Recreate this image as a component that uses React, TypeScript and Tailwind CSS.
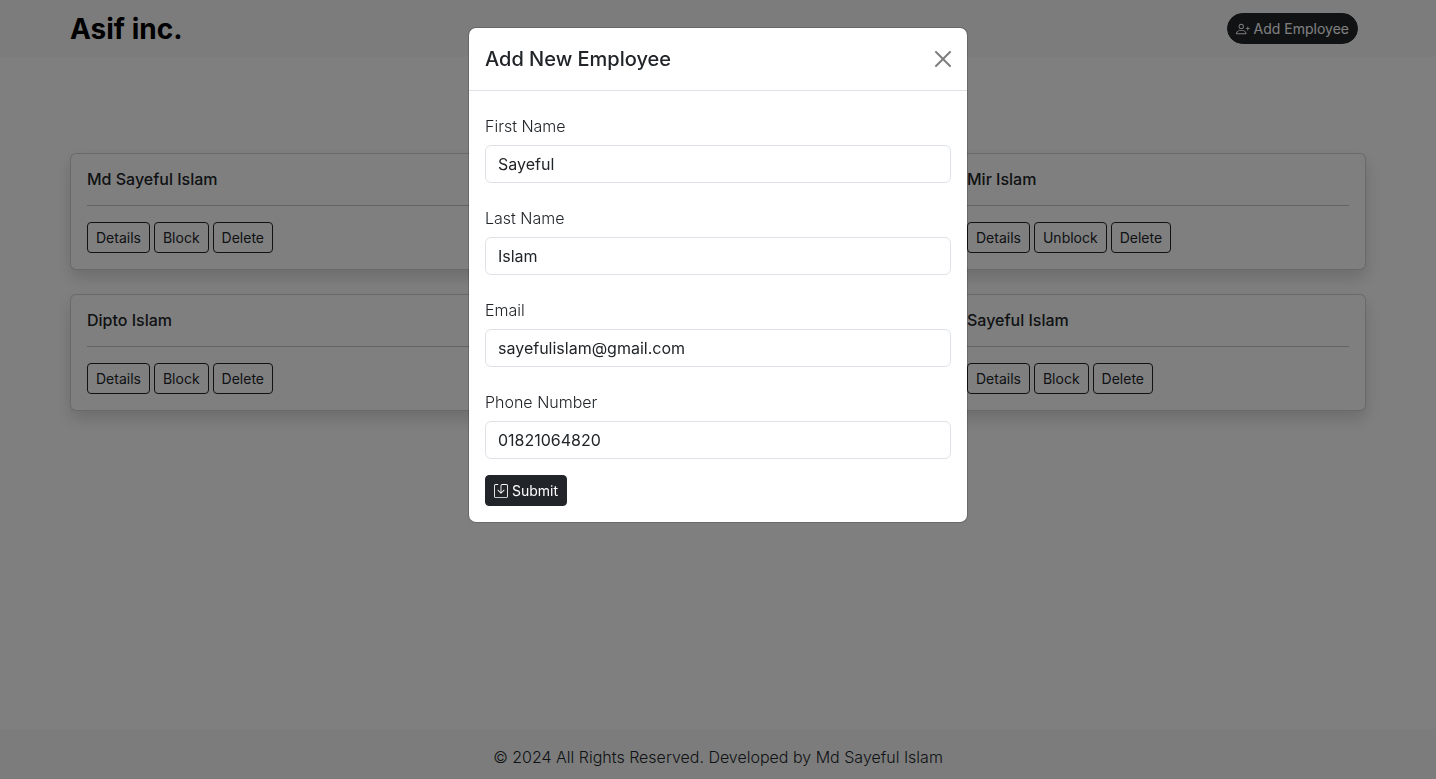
import type { InputHTMLAttributes } from "react";
import { BsPersonPlus, BsSave } from "react-icons/bs";

type Employee = { name: string; blocked: boolean; column: string };

const employees: Employee[] = [
  { name: "Md Sayeful Islam", blocked: false, column: "lg:col-start-1" },
  { name: "Mir Islam", blocked: true, column: "lg:col-start-3" },
  { name: "Dipto Islam", blocked: false, column: "lg:col-start-1" },
  { name: "Sayeful Islam", blocked: false, column: "lg:col-start-3" },
];

function OutlineButton({ label }: { label: string }) {
  return (
    <button
      type="button"
      className="rounded border border-[#212529] px-2 py-1 text-[14px] leading-[21px]"
    >
      {label}
    </button>
  );
}

function EmployeeCard({ name, blocked, column }: Employee) {
  return (
    <article
      className={`rounded-md border border-black/[.175] bg-white p-4 shadow-[0_8px_16px_rgba(0,0,0,0.15)] ${column}`}
    >
      <h2 className="text-[16px] leading-[19px] font-medium">{name}</h2>
      <hr className="my-4 border-[#212529]/25" />
      <div className="flex gap-1">
        <OutlineButton label="Details" />
        <OutlineButton label={blocked ? "Unblock" : "Block"} />
        <OutlineButton label="Delete" />
      </div>
    </article>
  );
}

type FieldProps = InputHTMLAttributes<HTMLInputElement> & { id: string; label: string };

function Field({ id, label, ...input }: FieldProps) {
  return (
    <div className="flex flex-col gap-[7px]">
      <label htmlFor={id} className="font-light">
        {label}
      </label>
      <input
        id={id}
        className="w-full rounded-md border border-[#dee2e6] bg-white px-3 py-1.5 leading-6"
        {...input}
      />
    </div>
  );
}

function AddEmployeeModal() {
  return (
    <div className="fixed inset-0 overflow-y-auto bg-black/50">
      <div
        role="dialog"
        aria-modal="true"
        aria-labelledby="modal-title"
        className="mx-auto my-[27px] max-w-[500px] rounded-lg border border-black/[.175] bg-white bg-clip-padding"
      >
        <div className="flex items-center justify-between border-b border-[#dee2e6] p-4">
          <h1 id="modal-title" className="text-[20px] leading-[30px] font-medium">
            Add New Employee
          </h1>
          <button type="button" aria-label="Close" className="opacity-50">
            <svg viewBox="0 0 16 16" className="size-4" fill="#000" aria-hidden="true">
              <path d="M.293.293a1 1 0 0 1 1.414 0L8 6.586 14.293.293a1 1 0 1 1 1.414 1.414L9.414 8l6.293 6.293a1 1 0 0 1-1.414 1.414L8 9.414l-6.293 6.293a1 1 0 0 1-1.414-1.414L6.586 8 .293 1.707a1 1 0 0 1 0-1.414z" />
            </svg>
          </button>
        </div>
        <form className="px-4 pt-[23px] pb-4">
          <div className="flex flex-col gap-[23px]">
            <Field id="first-name" label="First Name" type="text" defaultValue="Sayeful" />
            <Field id="last-name" label="Last Name" type="text" defaultValue="Islam" />
            <Field id="email" label="Email" type="email" defaultValue="sayefulislam@gmail.com" />
            <Field id="phone" label="Phone Number" type="tel" defaultValue="01821064820" />
          </div>
          <button
            type="button"
            className="mt-4 flex items-center gap-1 rounded border border-[#212529] bg-[#212529] px-2 py-1 text-[14px] leading-[21px] text-white"
          >
            <BsSave className="size-3.5" aria-hidden="true" />
            Submit
          </button>
        </form>
      </div>
    </div>
  );
}

export default function App() {
  return (
    <div className="flex min-h-screen flex-col bg-white font-['Inter',sans-serif] text-[16px] leading-6 text-[#212529]">
      <header className="bg-[#f8f9fa]">
        <div className="mx-auto flex h-[57px] max-w-[1320px] items-center justify-between pr-5 pl-3">
          <a href="#" className="text-[28px] leading-9 font-bold text-black">
            Asif inc.
          </a>
          <button
            type="button"
            className="flex items-center gap-1 rounded-full border border-[#212529] bg-[#212529] px-2 py-1 text-[14px] leading-[21px] text-white"
          >
            <BsPersonPlus className="size-3.5" aria-hidden="true" />
            Add Employee
          </button>
        </div>
      </header>
      <main className="mx-auto grid w-full max-w-[1320px] grow content-start gap-6 px-3 pt-24 lg:grid-cols-3">
        {employees.map((employee) => (
          <EmployeeCard key={employee.name} {...employee} />
        ))}
      </main>
      <footer className="bg-[#f8f9fa] px-3 pt-4 pb-2.5 text-center font-light">
        © 2024 All Rights Reserved. Developed by Md Sayeful Islam
      </footer>
      <AddEmployeeModal />
    </div>
  );
}
